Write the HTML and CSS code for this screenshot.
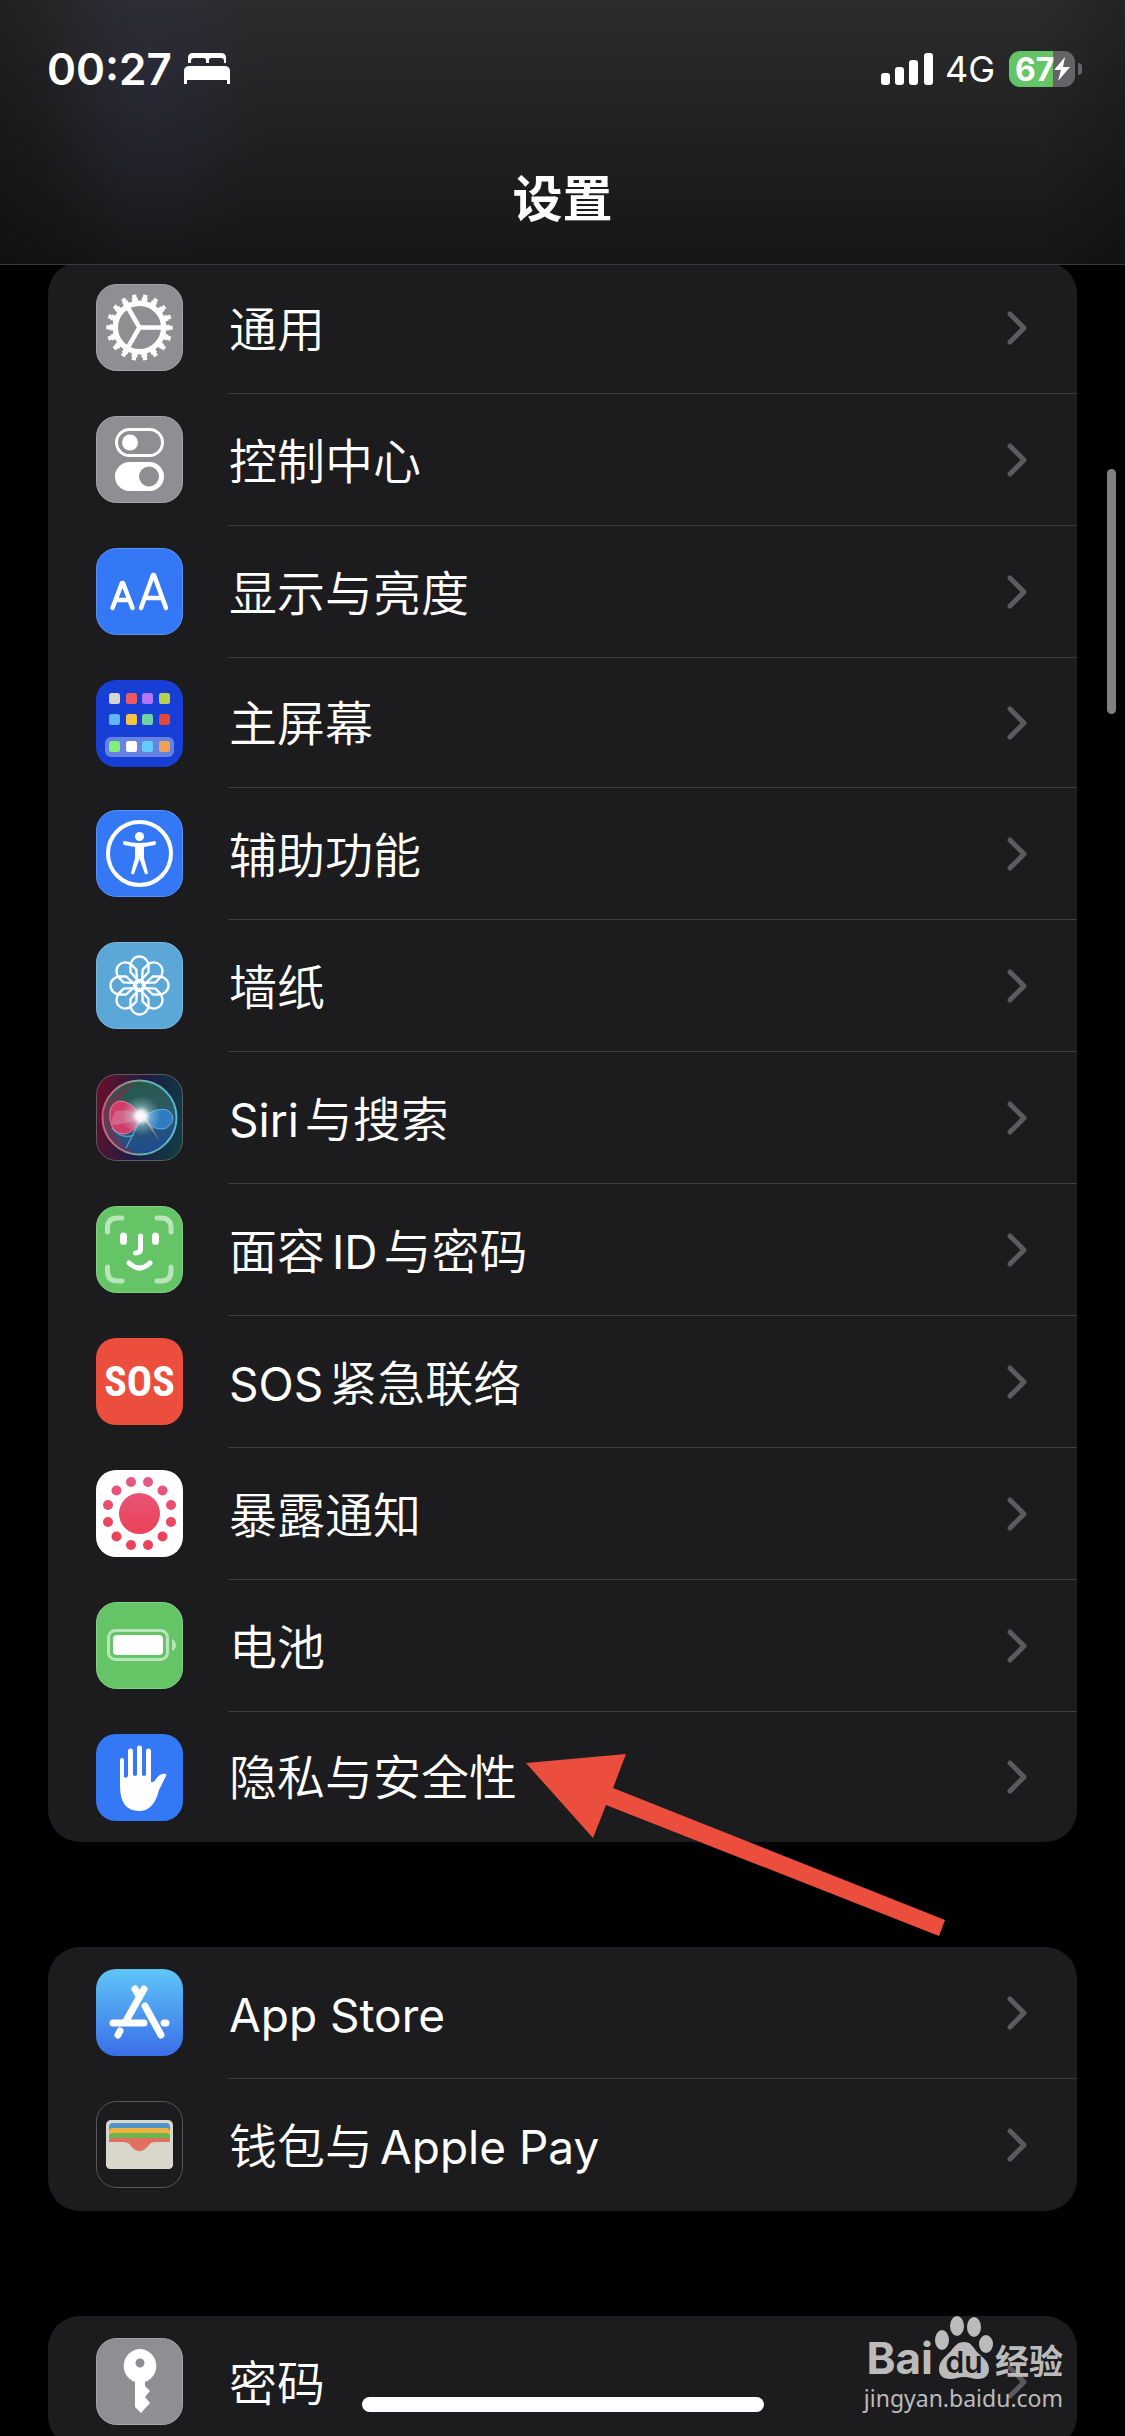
FILE: index.html
```html
<!DOCTYPE html>
<html lang="zh-CN">
<head>
  <meta charset="UTF-8">
  <meta name="viewport" content="width=device-width, initial-scale=1.0">
  <title>设置</title>
  <link rel="stylesheet" href="styles.css">
</head>
<body>
  <div class="screen">
    <header class="header">
      <div class="status">
        <div class="statusLeft">
          <span class="time">00:27</span>
          <svg class="bed" viewBox="0 0 46 32" fill="#fff">
            <path d="M4 10V5q0-5 5-5h28q5 0 5 5v5h-2V8q0-3-3-3H27q-2 0-2 3v2h-3V8q0-3-2-3H10Q7 5 7 8v2z"/>
            <path d="M0 31V18q0-5 6-5h34q6 0 6 5v13h-3v-4H3v4z"/>
          </svg>
        </div>
        <div class="statusRight">
          <svg class="signal" viewBox="0 0 52 32" fill="#fff">
            <rect x="0" y="20" width="9" height="12" rx="3"/>
            <rect x="14" y="14" width="9" height="18" rx="3"/>
            <rect x="28" y="7" width="9" height="25" rx="3"/>
            <rect x="43" y="0" width="9" height="32" rx="3"/>
          </svg>
          <span class="network">4G</span>
          <div class="battery">
            <span class="level">67</span>
            <svg class="bolt" viewBox="0 0 16 24"><path d="M11 0L0 13h7L4 24 16 10H9z" fill="#fff"/></svg>
          </div>
        </div>
      </div>
      <h1 class="title">设置</h1>
    </header>

    <main class="content">
      <ul class="group">
        <li><a class="row" href="#">
          <svg class="icon" viewBox="0 0 87 87">
            <rect x="0.500" y="0.500" width="86" height="86" rx="20" fill="#8e8e93" stroke="#a5a5a9"/>
            <g fill="none" stroke="#fff">
              <circle cx="43.500" cy="43.500" r="28" stroke-width="4" stroke-dasharray="5.800 3.974" stroke-dashoffset="2.900"/>
              <circle cx="43.500" cy="43.500" r="31.200" stroke-width="4" stroke-dasharray="4.200 6.691" stroke-dashoffset="2.100"/>
              <circle cx="43.500" cy="43.500" r="24.200" stroke-width="5.500"/>
              <path d="M43.500 43.500H68M43.500 43.500L31 22M43.500 43.500L31 65" stroke-width="4.500"/>
            </g>
          </svg>
          <span class="name">通用</span>
          <svg class="arrow" viewBox="0 0 20 34"><path d="M3 3l14 14L3 31"/></svg>
        </a></li>
        <li><a class="row" href="#">
          <svg class="icon" viewBox="0 0 87 87">
            <rect x="0.500" y="0.500" width="86" height="86" rx="20" fill="#8e8e93" stroke="#a5a5a9"/>
            <rect x="20.500" y="13.500" width="46" height="26" rx="13" fill="none" stroke="#fff" stroke-width="3"/>
            <circle cx="34" cy="26.500" r="8" fill="#fff"/>
            <rect x="19" y="46" width="49" height="29" rx="14.500" fill="#fff"/>
            <circle cx="53" cy="60.500" r="10" fill="#8e8e93"/>
          </svg>
          <span class="name">控制中心</span>
          <svg class="arrow" viewBox="0 0 20 34"><path d="M3 3l14 14L3 31"/></svg>
        </a></li>
        <li><a class="row" href="#">
          <svg class="icon" viewBox="0 0 87 87">
            <rect x="0.500" y="0.500" width="86" height="86" rx="20" fill="#3478f6" stroke="#5b92f8"/>
            <g fill="none" stroke="#fff" stroke-width="4.500" stroke-linecap="round" stroke-linejoin="round">
              <path d="M16.500 60l9.500-25h1l9.500 25M20 52h13"/>
              <path d="M45 60l12-33h1l12 33M49 50h17"/>
            </g>
          </svg>
          <span class="name">显示与亮度</span>
          <svg class="arrow" viewBox="0 0 20 34"><path d="M3 3l14 14L3 31"/></svg>
        </a></li>
        <li><a class="row short" href="#">
          <svg class="icon" viewBox="0 0 87 87">
            <rect width="87" height="87" rx="20" fill="#173fd5"/>
            <rect x="9" y="57" width="69" height="20" rx="6" fill="#6683e3"/>
            <rect x="13" y="13" width="11" height="11" rx="2.500" fill="#d6d6d0"/>
            <rect x="30" y="13" width="11" height="11" rx="2.500" fill="#ec5b62"/>
            <rect x="46" y="13" width="11" height="11" rx="2.500" fill="#b176f5"/>
            <rect x="63" y="13" width="11" height="11" rx="2.500" fill="#b9d24e"/>
            <rect x="13" y="34" width="11" height="11" rx="2.500" fill="#5cb8fa"/>
            <rect x="30" y="34" width="11" height="11" rx="2.500" fill="#f6c444"/>
            <rect x="46" y="34" width="11" height="11" rx="2.500" fill="#6fd3a5"/>
            <rect x="63" y="34" width="11" height="11" rx="2.500" fill="#e5483a"/>
            <rect x="13" y="61" width="11" height="11" rx="2.500" fill="#84ee79"/>
            <rect x="30" y="61" width="11" height="11" rx="2.500" fill="#fff"/>
            <rect x="46" y="61" width="11" height="11" rx="2.500" fill="#63cdfb"/>
            <rect x="63" y="61" width="11" height="11" rx="2.500" fill="#f1a153"/>
          </svg>
          <span class="name">主屏幕</span>
          <svg class="arrow" viewBox="0 0 20 34"><path d="M3 3l14 14L3 31"/></svg>
        </a></li>
        <li><a class="row" href="#">
          <svg class="icon" viewBox="0 0 87 87">
            <rect x="0.500" y="0.500" width="86" height="86" rx="20" fill="#3478f6" stroke="#5b92f8"/>
            <circle cx="43.500" cy="43.500" r="31.500" fill="none" stroke="#fff" stroke-width="4"/>
            <circle cx="43.500" cy="26.500" r="4.500" fill="#fff"/>
            <path d="M28 31q15.500 4 31 0 2 2 0 4l-11 2v11l4 15q-1 2-3 1l-5.500-15L38 64q-2 1-3-1l4-15V37l-11-2q-2-2 0-4z" fill="#fff"/>
          </svg>
          <span class="name">辅助功能</span>
          <svg class="arrow" viewBox="0 0 20 34"><path d="M3 3l14 14L3 31"/></svg>
        </a></li>
        <li><a class="row" href="#">
          <svg class="icon" viewBox="0 0 87 87">
            <rect x="0.500" y="0.500" width="86" height="86" rx="20" fill="#5aa7d8" stroke="#7bb9e0"/>
            <defs><path id="petal" d="M34.500 24a9 9.500 0 0 1 18 0V30L43.500 40 34.500 30z"/></defs>
            <g fill="none" stroke="#fff" stroke-width="2.300">
              <use href="#petal"/>
              <use href="#petal" transform="rotate(45 43.500 43.500)"/>
              <use href="#petal" transform="rotate(90 43.500 43.500)"/>
              <use href="#petal" transform="rotate(135 43.500 43.500)"/>
              <use href="#petal" transform="rotate(180 43.500 43.500)"/>
              <use href="#petal" transform="rotate(225 43.500 43.500)"/>
              <use href="#petal" transform="rotate(270 43.500 43.500)"/>
              <use href="#petal" transform="rotate(315 43.500 43.500)"/>
              <circle cx="43.500" cy="43.500" r="5.500"/>
            </g>
          </svg>
          <span class="name">墙纸</span>
          <svg class="arrow" viewBox="0 0 20 34"><path d="M3 3l14 14L3 31"/></svg>
        </a></li>
        <li><a class="row" href="#">
          <svg class="icon" viewBox="0 0 87 87">
            <defs>
              <linearGradient id="siriBg" x1="0" y1="0.400" x2="1" y2="0.600">
                <stop offset="0" stop-color="#64102c"/><stop offset="0.500" stop-color="#1c1c44"/><stop offset="1" stop-color="#123c44"/>
              </linearGradient>
              <linearGradient id="siriRing" x1="0" y1="0.500" x2="1" y2="0.500">
                <stop offset="0" stop-color="#e0566f"/><stop offset="0.500" stop-color="#6fae9a"/><stop offset="1" stop-color="#58b8d8"/>
              </linearGradient>
              <linearGradient id="siriBall" x1="0.400" y1="0" x2="0.600" y2="1">
                <stop offset="0" stop-color="#24584a"/><stop offset="0.450" stop-color="#2e5a62"/><stop offset="1" stop-color="#1c4a94"/>
              </linearGradient>
              <radialGradient id="siriGlow">
                <stop offset="0" stop-color="#fff"/><stop offset="0.250" stop-color="#fff" stop-opacity="0.900"/><stop offset="0.500" stop-color="#c8ecec" stop-opacity="0.400"/><stop offset="1" stop-color="#9fd8d8" stop-opacity="0"/>
              </radialGradient>
            </defs>
            <rect x="0.500" y="0.500" width="86" height="86" rx="20" fill="url(#siriBg)" stroke="#5c5c62"/>
            <circle cx="43.500" cy="43.500" r="37" fill="url(#siriBall)" stroke="url(#siriRing)" stroke-width="2"/>
            <path d="M7 38q8-20 36-31-22 14-26 38 0 26 26 35Q10 76 7 38z" fill="#8a2848" opacity="0.600"/>
            <path d="M46 43Q34 26 23 27 12 30 14 45 16 61 29 60 39 58 46 43z" fill="#d03c6c" stroke="#ec7c98"/>
            <path d="M46 43Q34 34 20 37q-5 6-4 14 14 0 30-8z" fill="#d88aa4" opacity="0.500"/>
            <path d="M46 43q16-10 25-7 8 4 5 12-4 8-13 7-10-2-17-12z" fill="#2f7cc0" stroke="#5cb4e0"/>
            <path d="M46 43l17 23-11-20z" fill="#d894b4" opacity="0.700"/>
            <path d="M46 43L30 74M16 54q10 12 22 7" fill="none" stroke="#6bb2dc" stroke-width="1.500" opacity="0.700"/>
            <circle cx="45" cy="42" r="20" fill="url(#siriGlow)"/>
          </svg>
          <span class="name"><span class="latin before">Siri</span>与搜索</span>
          <svg class="arrow" viewBox="0 0 20 34"><path d="M3 3l14 14L3 31"/></svg>
        </a></li>
        <li><a class="row" href="#">
          <svg class="icon" viewBox="0 0 87 87">
            <rect x="0.500" y="0.500" width="86" height="86" rx="20" fill="#65c466" stroke="#84d085"/>
            <g fill="none" stroke-width="5" stroke-linecap="round">
              <path d="M11.500 26v-4q0-10 10-10H26M61 12h4q10 0 10 10v4M11.500 61v4q0 10 10 10H26M61 75h4q10 0 10-10v-4" stroke="#b9e5ba"/>
              <path d="M27.500 30v5.500M59.500 30v5.500" stroke="#fff" stroke-width="7"/>
              <path d="M44.500 30v13q0 4-5 4" stroke="#fff"/>
              <path d="M33 57q10.500 10 21 0" stroke="#fff"/>
            </g>
          </svg>
          <span class="name">面容<span class="latin before after">ID</span>与密码</span>
          <svg class="arrow" viewBox="0 0 20 34"><path d="M3 3l14 14L3 31"/></svg>
        </a></li>
        <li><a class="row" href="#">
          <span class="icon sos">SOS</span>
          <span class="name"><span class="latin before">SOS</span>紧急联络</span>
          <svg class="arrow" viewBox="0 0 20 34"><path d="M3 3l14 14L3 31"/></svg>
        </a></li>
        <li><a class="row" href="#">
          <svg class="icon" viewBox="0 0 87 87">
            <defs>
              <linearGradient id="pink" gradientUnits="userSpaceOnUse" x1="0" y1="8" x2="0" y2="60">
                <stop offset="0" stop-color="#e65a85"/><stop offset="1" stop-color="#eb445a"/>
              </linearGradient>
            </defs>
            <rect width="87" height="87" rx="20" fill="#fff"/>
            <g fill="url(#pink)">
              <circle cx="43.500" cy="43.500" r="20.500"/>
              <circle cx="35" cy="12" r="5"/><circle cx="52" cy="12" r="5"/>
              <circle cx="20.500" cy="20.500" r="5"/><circle cx="66.500" cy="20.500" r="5"/>
              <circle cx="12" cy="35" r="5"/><circle cx="75" cy="35" r="5"/>
              <circle cx="12" cy="52" r="5"/><circle cx="75" cy="52" r="5"/>
              <circle cx="20.500" cy="66.500" r="5"/><circle cx="66.500" cy="66.500" r="5"/>
              <circle cx="35" cy="75" r="5"/><circle cx="52" cy="75" r="5"/>
            </g>
          </svg>
          <span class="name">暴露通知</span>
          <svg class="arrow" viewBox="0 0 20 34"><path d="M3 3l14 14L3 31"/></svg>
        </a></li>
        <li><a class="row" href="#">
          <svg class="icon" viewBox="0 0 87 87">
            <rect x="0.500" y="0.500" width="86" height="86" rx="20" fill="#65c466" stroke="#84d085"/>
            <rect x="12.500" y="28.500" width="59" height="29" rx="7" fill="none" stroke="#b9e5ba" stroke-width="3"/>
            <rect x="17" y="33" width="50" height="20" rx="4" fill="#fff"/>
            <path d="M76 37q4 2 4 6t-4 6z" fill="#b9e5ba"/>
          </svg>
          <span class="name">电池</span>
          <svg class="arrow" viewBox="0 0 20 34"><path d="M3 3l14 14L3 31"/></svg>
        </a></li>
        <li class="marked"><a class="row short" href="#">
          <svg class="icon" viewBox="0 0 87 87">
            <rect width="87" height="87" rx="20" fill="#3478f6"/>
            <path d="M24 52V26a2 2 0 0 1 4 0V43q2 2 4-1V17a2.500 2.500 0 0 1 5 0V41q2 2 4 0V14a2.500 2.500 0 0 1 5 0V41q2 2 4 0V17a2.500 2.500 0 0 1 5 0V48q3 1 5-3 4-6 10-5 1 1-1 4l-6 12Q58 77 43 77 24 77 24 52z" fill="#fff"/>
          </svg>
          <span class="name">隐私与安全性</span>
          <svg class="arrow" viewBox="0 0 20 34"><path d="M3 3l14 14L3 31"/></svg>
        </a>
        <svg class="pointer" viewBox="0 0 419 182"><path d="M0 9L100 0 87 34 419 166 413 182 80 51 67 84z" fill="#eb4e3d"/></svg>
        </li>
      </ul>

      <ul class="group">
        <li><a class="row" href="#">
          <svg class="icon" viewBox="0 0 87 87">
            <defs>
              <linearGradient id="storeBg" x1="0" y1="0" x2="0" y2="1">
                <stop offset="0" stop-color="#5fc6f8"/><stop offset="1" stop-color="#3a6ee8"/>
              </linearGradient>
            </defs>
            <rect width="87" height="87" rx="20" fill="url(#storeBg)"/>
            <g fill="none" stroke="#fff" stroke-width="7" stroke-linecap="round">
              <path d="M48 20L30 52M39 20l4 7M17 54h31M68 54h2M24 62l-2 4M49 37l16 29"/>
            </g>
          </svg>
          <span class="name latin">App Store</span>
          <svg class="arrow" viewBox="0 0 20 34"><path d="M3 3l14 14L3 31"/></svg>
        </a></li>
        <li><a class="row" href="#">
          <svg class="icon" viewBox="0 0 87 87">
            <rect x="0.500" y="0.500" width="86" height="86" rx="20" fill="#1c1c1e" stroke="#58585a"/>
            <rect x="10" y="19" width="67" height="49" rx="5" fill="#d9d6cc"/>
            <path d="M13 26q0-4 4-4h53q4 0 4 4v8H13z" fill="#4f95c8"/>
            <path d="M13 31q0-4 4-4h53q4 0 4 4v6H13z" fill="#f1b33f"/>
            <path d="M13 36q0-4 4-4h53q4 0 4 4v6H13z" fill="#6cb54b"/>
            <path d="M13 41q0-4 4-4h53q4 0 4 4v5H13z" fill="#e0705f"/>
            <path d="M10 41H28q5 0 7 4 4 5 8.500 5t8.500-5q2-4 7-4H77V63q0 5-5 5H15q-5 0-5-5z" fill="#d9d6cc"/>
            <path d="M28 41q5 0 7 4 4 5 8.500 5t8.500-5q2-4 7-4z" fill="#e0705f"/>
          </svg>
          <span class="name">钱包与<span class="latin after">Apple Pay</span></span>
          <svg class="arrow" viewBox="0 0 20 34"><path d="M3 3l14 14L3 31"/></svg>
        </a></li>
      </ul>

      <ul class="group">
        <li><a class="row" href="#">
          <svg class="icon" viewBox="0 0 87 87">
            <rect x="0.500" y="0.500" width="86" height="86" rx="20" fill="#8e8e93" stroke="#a5a5a9"/>
            <path fill-rule="evenodd" d="M44 11a17 17 0 0 1 5 33v4l5 5-5 6 5 6-9 10-6-6V44a17 17 0 0 1 5-33zM44 20.500a4.500 4.500 0 1 0 0 9 4.500 4.500 0 0 0 0-9z" fill="#fff"/>
          </svg>
          <span class="name">密码</span>
          <svg class="arrow" viewBox="0 0 20 34"><path d="M3 3l14 14L3 31"/></svg>
        </a></li>
      </ul>
    </main>

    <div class="scrollbar"></div>
    <div class="homeBar"></div>
    <div class="watermark">
      <div class="brand">
        <span class="bai">Bai</span>
        <span class="paw">
          <svg viewBox="0 0 58 64" fill="#c4c4c4">
            <ellipse cx="7" cy="24" rx="7" ry="10"/>
            <ellipse cx="22" cy="10" rx="7" ry="10"/>
            <ellipse cx="39" cy="11" rx="7" ry="10"/>
            <ellipse cx="51" cy="28" rx="7" ry="9"/>
            <path d="M29 26c7 0 9 5 13 10 5 5 12 9 12 17 0 7-5 10-11 10-5 0-9-2-14-2s-9 2-14 2C9 63 4 60 4 53c0-8 6-12 11-17 4-5 7-10 14-10z"/>
          </svg>
          <span class="du">du</span>
        </span>
        <span class="jingyan">经验</span>
      </div>
      <p class="site">jingyan.baidu.com</p>
    </div>
  </div>
</body>
</html>
```
FILE: styles.css
```css
* {
  padding: 0;
  margin: 0;
  box-sizing: border-box;
}
body {
  background: #000;
  color: #fff;
  font-family: Inter, "Noto Sans CJK SC", sans-serif;
}
ul {
  list-style: none;
}
svg {
  display: block;
  flex-shrink: 0;
}
.screen {
  position: relative;
  height: 100vh;
  overflow: hidden;
}

/* 顶部 */
.header {
  position: relative;
  z-index: 1;
  border-bottom: 1px solid #3a3a3b;
  background:
    radial-gradient(ellipse 120px 200px at 150px 80px, rgba(50, 48, 90, .3), transparent),
    linear-gradient(90deg, rgba(0, 0, 0, .25), transparent 12%, transparent 92%, rgba(0, 0, 0, .2)),
    linear-gradient(#2c2c2d, #161616);
}
.status {
  display: flex;
  justify-content: space-between;
  height: 138px;
  padding: 0 43px 0 47px;
}
.statusLeft,
.statusRight {
  display: flex;
  align-items: center;
}
.statusLeft {
  gap: 12px;
}
.statusRight {
  gap: 12px;
}
.time {
  font-size: 44px;
  font-weight: 600;
}
.bed {
  width: 46px;
  height: 32px;
}
.signal {
  width: 52px;
  height: 32px;
}
.network {
  margin-right: 2px;
  font-size: 36px;
}
.battery {
  position: relative;
  display: flex;
  align-items: center;
  width: 66px;
  height: 36px;
  margin-right: 7px;
  padding-left: 6px;
  border-radius: 11px;
  background: linear-gradient(90deg, #65c466 67%, #646466 67%);
}
.battery::after {
  content: '';
  position: absolute;
  right: -7px;
  width: 4px;
  height: 12px;
  border-radius: 0 4px 4px 0;
  background: #646466;
}
.level {
  font-size: 32px;
  font-weight: 700;
}
.bolt {
  width: 16px;
  height: 24px;
}
.title {
  height: 126px;
  font-size: 50px;
  font-weight: 700;
  line-height: 122px;
  text-align: center;
}

/* 列表 */
.content {
  display: flex;
  flex-direction: column;
  gap: 105px;
  margin-top: -3px;
  padding: 0 48px;
}
.group {
  border-radius: 32px;
  background: #1c1c1e;
}
.group li + li .row::before {
  content: '';
  position: absolute;
  top: -1px;
  left: 180px;
  right: 0;
  height: 1px;
  background: #3c3c3f;
}
.marked {
  position: relative;
}
.row {
  position: relative;
  display: flex;
  align-items: center;
  height: 132px;
  padding: 0 50px 1px 48px;
  color: #fff;
  text-decoration: none;
}
.row.short {
  height: 130px;
  padding-bottom: 0;
}
.icon {
  width: 87px;
  height: 87px;
  margin-right: 46px;
}
.sos {
  border-radius: 20px;
  background: #eb4e3d;
  font-family: "Roboto Condensed", "Liberation Sans Narrow", Roboto, sans-serif;
  font-size: 42px;
  font-weight: 700;
  line-height: 87px;
  text-align: center;
}
.name {
  flex: 1;
  padding-top: 4px;
  font-family: Inter, "Noto Sans CJK SC DemiLight", "Noto Sans CJK SC", sans-serif;
  font-size: 48px;
  font-weight: 400;
  line-height: 60px;
}
.short .name {
  padding-top: 1px;
}
.latin {
  font-size: 46px;
}
.before {
  margin-right: 6px;
}
.after {
  margin-left: 7px;
}
.arrow {
  width: 20px;
  height: 34px;
  fill: none;
  stroke: #5b5b5f;
  stroke-width: 5;
  stroke-linecap: round;
  stroke-linejoin: round;
}
.pointer {
  position: absolute;
  z-index: 1;
  top: 42px;
  left: 478px;
  width: 419px;
  height: 182px;
}

/* 浮层 */
.scrollbar {
  position: absolute;
  top: 469px;
  right: 9px;
  width: 9px;
  height: 245px;
  border-radius: 5px;
  background: #808080;
}
.homeBar {
  position: absolute;
  left: 50%;
  bottom: 24px;
  width: 402px;
  height: 15px;
  margin-left: -201px;
  border-radius: 8px;
  background: #fff;
}
.watermark {
  position: absolute;
  right: 62px;
  bottom: 20px;
  color: #c4c4c4;
  opacity: .95;
}
.brand {
  display: flex;
  align-items: flex-end;
  justify-content: flex-end;
  gap: 2px;
}
.bai {
  font-size: 44px;
  font-weight: 700;
  line-height: 44px;
}
.paw {
  position: relative;
  width: 58px;
}
.du {
  position: absolute;
  left: 0;
  right: 0;
  bottom: 0;
  color: #1c1c1e;
  font-size: 30px;
  font-weight: 600;
  line-height: 36px;
  text-align: center;
}
.jingyan {
  font-size: 34px;
  font-weight: 700;
  line-height: 36px;
}
.site {
  font-family: "Noto Sans", sans-serif;
  font-size: 23px;
  line-height: 36px;
}
```
